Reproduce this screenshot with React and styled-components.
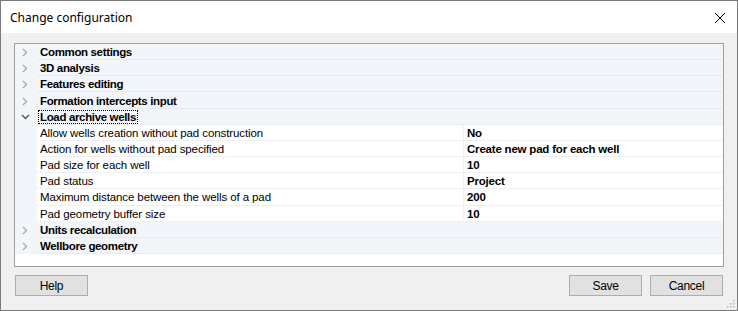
import React from "react"
import styled, { createGlobalStyle } from "styled-components"

const GlobalStyle = createGlobalStyle`
  html, body {
    margin: 0;
    padding: 0;
    background: #ffffff;
  }
`

const Window = styled.div`
  width: 738px;
  height: 311px;
  box-sizing: border-box;
  border: 1px solid #7a7a7a;
  display: flex;
  flex-direction: column;
  background: #f0f0f0;
  font-family: "Liberation Sans", Arial, sans-serif;
  font-size: 11.5px;
  color: #000;
  position: relative;
`

const TitleBar = styled.div`
  height: 32px;
  background: #ffffff;
  display: flex;
  align-items: center;
  justify-content: space-between;
  padding: 1px 11px 0 9px;
  box-sizing: border-box;
`

const Title = styled.span`
  font-family: "Segoe UI", "Noto Sans", sans-serif;
  font-size: 12px;
  color: #000;
`

const CloseButton = styled.svg`
  width: 12px;
  height: 12px;
`

const Body = styled.div`
  flex: 1;
  display: flex;
  flex-direction: column;
  padding: 10px 13px 0 13px;
`

const Grid = styled.div`
  height: 224px;
  box-sizing: border-box;
  border: 1px solid #a0a0a0;
  background: #ffffff;
`

const Row = styled.div`
  height: 16.17px;
  display: flex;
  background: ${({ $category }) => ($category ? "#f2f5fa" : "#ffffff")};
`

const Gutter = styled.div`
  width: 22px;
  flex: none;
  background: #f2f5fa;
  display: flex;
  align-items: center;
  justify-content: center;
  padding: 1px 2px 0 0;
  box-sizing: border-box;
`

const Cell = styled.div`
  box-sizing: border-box;
  display: flex;
  align-items: center;
  padding-top: 1px;
  border-bottom: 1px solid ${({ $category }) => ($category ? "#e6ebf2" : "#eef0f3")};
  white-space: nowrap;
  overflow: hidden;
`

const CategoryCell = styled(Cell)`
  flex: 1;
  font-weight: bold;
  letter-spacing: -0.35px;
  padding-left: 1px;
`

const Label = styled.span`
  padding: 0 1px;
  border: 1px dotted ${({ $focused }) => ($focused ? "#000" : "transparent")};
  line-height: 12px;
`

const NameCell = styled(Cell)`
  width: 427px;
  flex: none;
  padding-left: 3px;
  letter-spacing: -0.1px;
  border-right: 1px solid #eef0f3;
`

const ValueCell = styled(Cell)`
  flex: 1;
  padding-left: 3px;
  font-weight: bold;
  letter-spacing: -0.2px;
`

const Footer = styled.div`
  display: flex;
  align-items: center;
  padding: 8px 1px 0 1px;
  gap: 8px;
`

const Spacer = styled.div`
  flex: 1;
`

const Button = styled.button`
  width: 73px;
  height: 21px;
  box-sizing: border-box;
  border: 1px solid #adadad;
  background: #e1e1e1;
  font-family: "Liberation Sans", Arial, sans-serif;
  font-size: 12px;
  letter-spacing: -0.3px;
  color: #000;
  padding: 0;
  margin: 0;
`

const Grip = styled.svg`
  position: absolute;
  right: 2px;
  bottom: 2px;
  width: 10px;
  height: 10px;
`

const Chevron = ({ open }) =>
  open ? (
    <svg width="9" height="6" viewBox="0 0 9 6">
      <path d="M1 1 L4.5 4.5 L8 1" fill="none" stroke="#505050" strokeWidth="1.3" />
    </svg>
  ) : (
    <svg width="6" height="9" viewBox="0 0 6 9">
      <path d="M1 1 L4.5 4.5 L1 8" fill="none" stroke="#a8a8a8" strokeWidth="1.3" />
    </svg>
  )

const sections = [
  { name: "Common settings" },
  { name: "3D analysis" },
  { name: "Features editing" },
  { name: "Formation intercepts input" },
  {
    name: "Load archive wells",
    open: true,
    items: [
      ["Allow wells creation without pad construction", "No"],
      ["Action for wells without pad specified", "Create new pad for each well"],
      ["Pad size for each well", "10"],
      ["Pad status", "Project"],
      ["Maximum distance between the wells of a pad", "200"],
      ["Pad geometry buffer size", "10"],
    ],
  },
  { name: "Units recalculation" },
  { name: "Wellbore geometry" },
]

const App = () => {
  return (
    <>
      <GlobalStyle />
      <Window>
        <TitleBar>
          <Title>Change configuration</Title>
          <CloseButton viewBox="0 0 12 12">
            <path d="M1 1 L11 11 M11 1 L1 11" stroke="#000" strokeWidth="1" />
          </CloseButton>
        </TitleBar>
        <Body>
          <Grid>
            {sections.map((s) => (
              <React.Fragment key={s.name}>
                <Row $category>
                  <Gutter>
                    <Chevron open={s.open} />
                  </Gutter>
                  <CategoryCell $category>
                    <Label $focused={s.open}>{s.name}</Label>
                  </CategoryCell>
                </Row>
                {s.open &&
                  s.items.map(([name, value]) => (
                    <Row key={name}>
                      <Gutter />
                      <NameCell>{name}</NameCell>
                      <ValueCell>{value}</ValueCell>
                    </Row>
                  ))}
              </React.Fragment>
            ))}
          </Grid>
          <Footer>
            <Button>Help</Button>
            <Spacer />
            <Button>Save</Button>
            <Button>Cancel</Button>
          </Footer>
        </Body>
        <Grip viewBox="0 0 10 10">
          {[
            [8, 2],
            [8, 5],
            [5, 5],
            [8, 8],
            [5, 8],
            [2, 8],
          ].map(([x, y]) => (
            <rect key={`${x}-${y}`} x={x} y={y} width="1.5" height="1.5" fill="#b8b8b8" />
          ))}
        </Grip>
      </Window>
    </>
  )
}

export default App
